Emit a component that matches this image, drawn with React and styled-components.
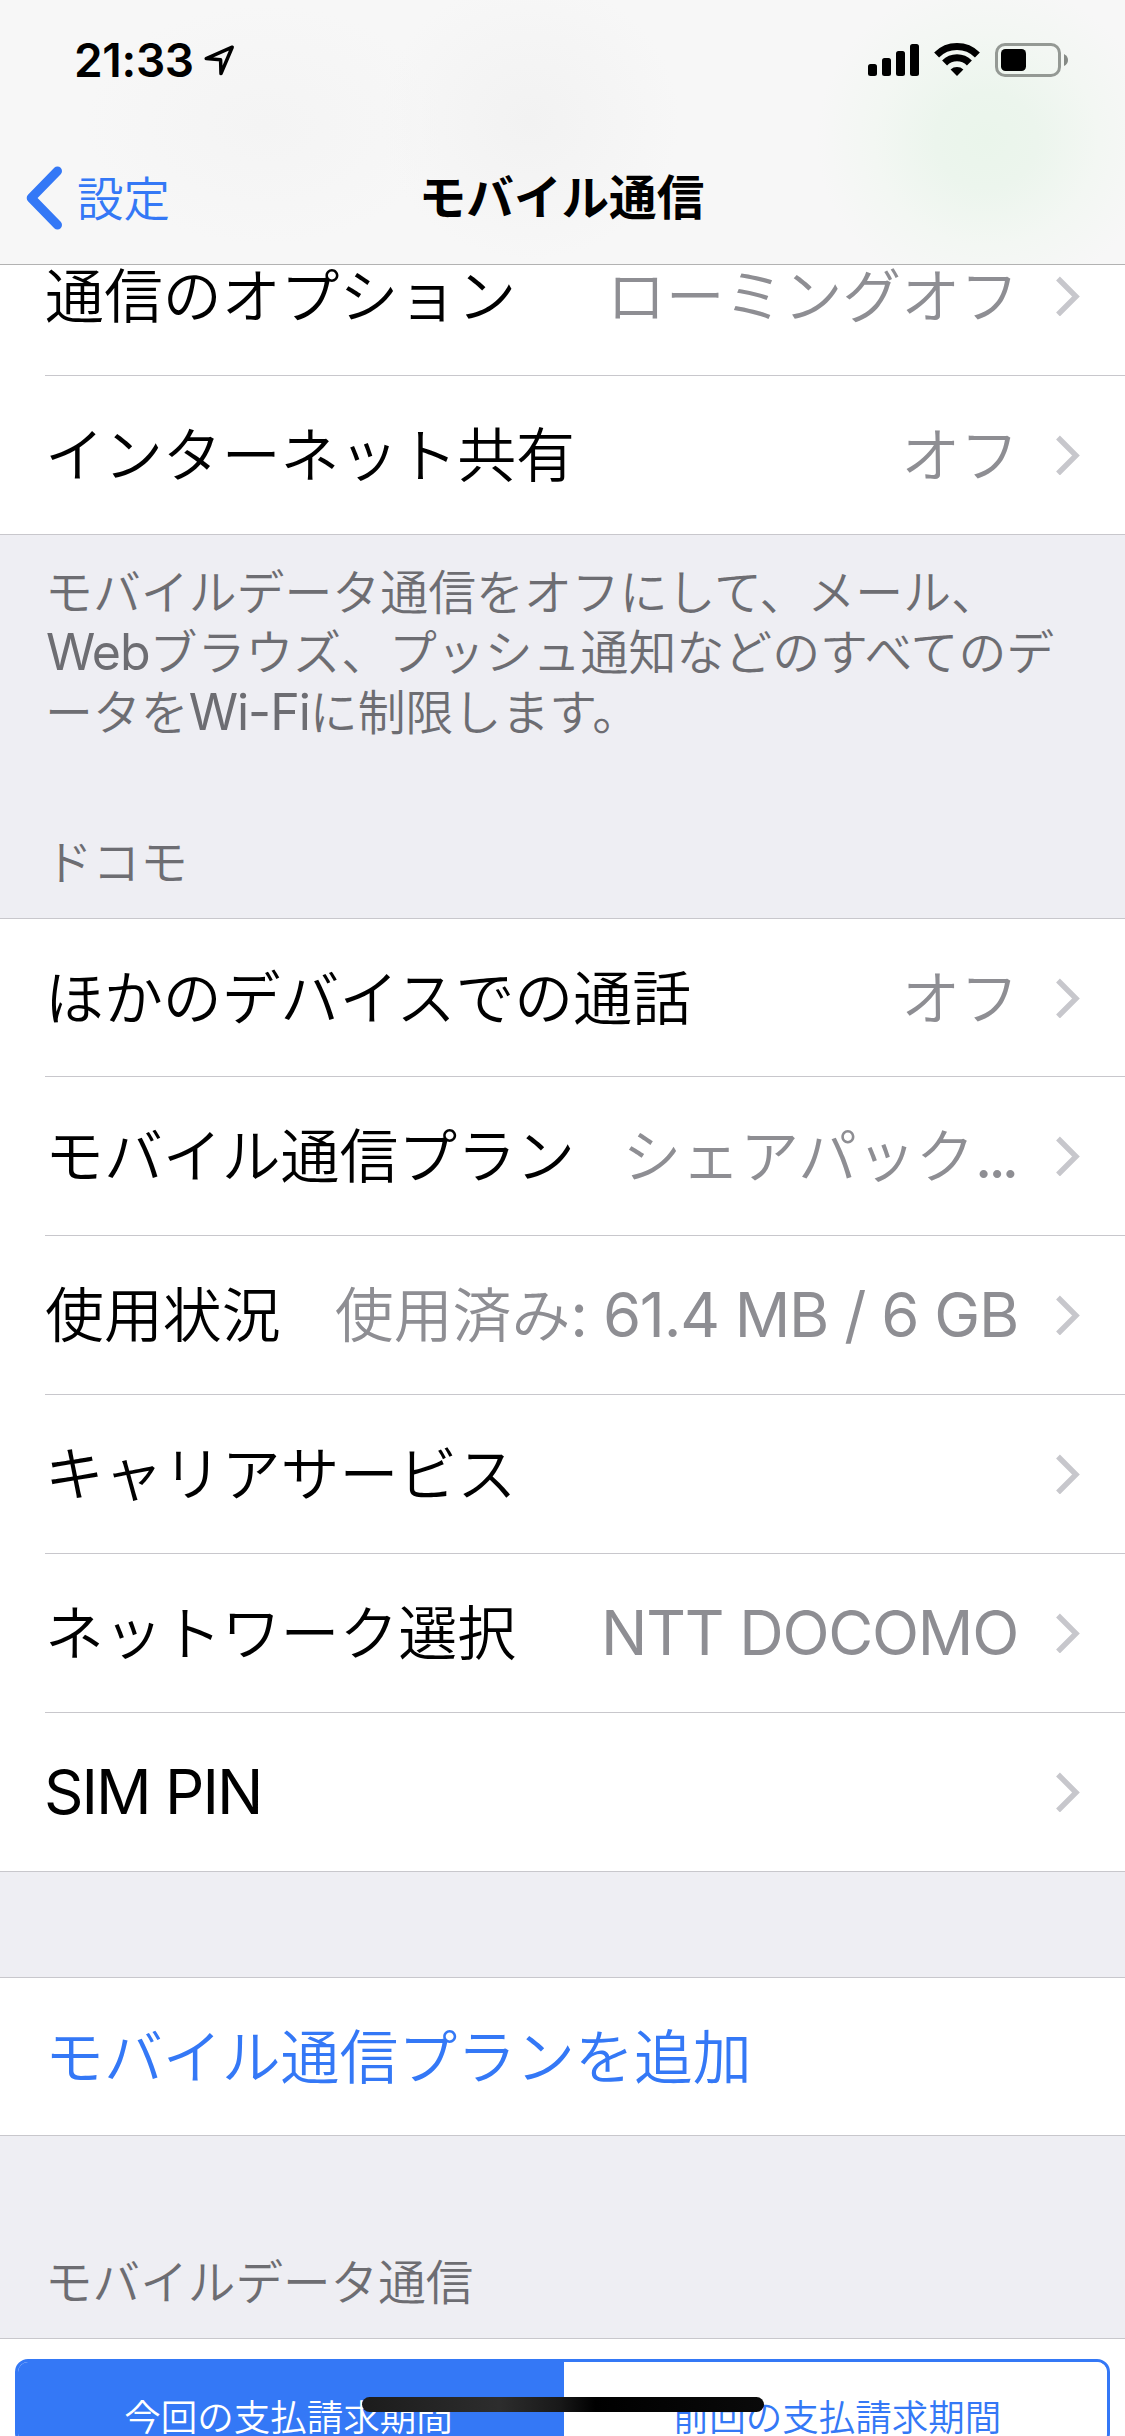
import React from "react";
import styled, { createGlobalStyle } from "styled-components";

const BLUE = "#3478f6";
const LINE = "#c8c7cc";

const Global = createGlobalStyle`
  * { box-sizing: border-box; }
  html, body { margin: 0; padding: 0; background: #efeff4; }
`;

const Screen = styled.main`
  position: relative;
  display: flex;
  flex-direction: column;
  width: 1125px;
  height: 2436px;
  overflow: hidden;
  background: #eeeef3;
  font-family: "Noto Sans CJK JP", sans-serif;
  font-weight: 350;
  color: #000;
`;

const Header = styled.header`
  flex: none;
  height: 265px;
  border-bottom: 1px solid #b2b2b2;
  background:
    radial-gradient(ellipse 170px 160px at 986px 140px, #eaf5eb 0%, #ecf5ed 30%, rgba(240, 247, 240, 0.6) 65%, rgba(247, 247, 247, 0) 100%),
    radial-gradient(ellipse 150px 140px at 530px 120px, #f2f2f2 0%, rgba(242, 242, 242, 0) 100%),
    radial-gradient(ellipse 180px 120px at 265px 125px, #f4f4f4 0%, rgba(244, 244, 244, 0) 100%),
    #f7f7f7;
`;

const StatusBar = styled.div`
  display: flex;
  justify-content: space-between;
  align-items: center;
  height: 120px;
  padding: 0 57px 0 74px;
`;

const StatusGroup = styled.div`
  display: flex;
  align-items: center;
`;

const Clock = styled.span`
  width: 129px;
  font: 600 46px/60px Inter, sans-serif;
  letter-spacing: -0.3px;
  white-space: nowrap;
`;

const NavBar = styled.nav`
  display: grid;
  grid-template-columns: 1fr auto 1fr;
  align-items: center;
  height: 144px;
  padding: 12px 27px 0;
  line-height: 66px;
`;

const BackButton = styled.a`
  display: flex;
  align-items: center;
  gap: 14px;
  margin-left: -1px;
  color: ${BLUE};
  font-size: 46.5px;

  span { padding-bottom: 5px; }
`;

const Title = styled.h1`
  margin: 0;
  padding: 0 2px 6px 0;
  font-size: 47.6px;
  font-weight: 700;
`;

const Scroller = styled.div`
  flex: 1;
  min-height: 0;
  overflow: hidden;
`;

const Content = styled.div`
  margin-top: -48px;
`;

const Group = styled.section`
  background: #fff;
  border-top: ${(p) => (p.$open ? "0" : `1px solid ${LINE}`)};
  border-bottom: 1px solid ${LINE};
`;

const Row = styled.div`
  display: flex;
  align-items: center;
  justify-content: space-between;
  height: 159px;
  margin-left: 45px;
  padding-right: 45px;
  border-bottom: 1px solid ${LINE};
  font-size: 58.9px;
  line-height: 84px;
  white-space: nowrap;
  color: ${(p) => (p.$action ? BLUE : "#000")};

  &:first-child { height: ${(p) => (p.$tall ? "159px" : "158px")}; }
  &:last-child { height: 158px; border-bottom: 0; }
  &:only-child { height: 157px; }
`;

const Label = styled.span`
  padding-bottom: 6px;
`;

const Detail = styled.span`
  display: flex;
  align-items: center;
  gap: 37px;
  color: #8e8e93;
`;

const Value = styled.span`
  padding-bottom: 6px;
`;

const Latin = styled.span`
  font-family: Inter, sans-serif;
  font-weight: 400;
  font-size: 1.045em;
  letter-spacing: ${(p) => p.$track || "-0.02em"};
  margin-left: ${(p) => p.$shift || 0}px;
  margin-right: ${(p) => p.$trail || 0}px;
  line-height: 1;
`;

const Note = styled.p`
  height: 180px;
  margin: 24px 45px 3px;
  color: #6d6d72;
  font-size: 47.9px;
  line-height: 60px;
  white-space: nowrap;
`;

const Caption = styled.h2`
  display: flex;
  align-items: flex-end;
  height: ${(p) => p.$height}px;
  margin: 0;
  padding: 0 45px 28px;
  color: #6d6d72;
  font-size: 47.6px;
  font-weight: 350;
  line-height: 60px;
`;

const Spacer = styled.div`
  height: 105px;
`;

const Billing = styled.section`
  height: 120px;
  padding: 20px 15px 0;
  background: #fff;
  border-top: 1px solid ${LINE};
`;

const Segments = styled.div`
  display: grid;
  grid-template-columns: 546px 1fr;
  height: 87px;
  border: 3px solid ${BLUE};
  border-radius: 13px;
  overflow: hidden;
`;

const Segment = styled.button`
  display: block;
  margin: 0;
  padding: ${(p) => (p.$active ? "27px 5px 0 0" : "27px 0 0 3px")};
  border: 0;
  background: ${(p) => (p.$active ? BLUE : "#fff")};
  color: ${(p) => (p.$active ? "#fff" : BLUE)};
  font: 350 36.5px/50px "Noto Sans CJK JP", sans-serif;
`;

const HomeIndicator = styled.div`
  position: absolute;
  left: 362px;
  top: 2397px;
  width: 402px;
  height: 15px;
  border-radius: 8px;
  background: linear-gradient(90deg, #1c1c1c 0%, #2d2d2d 34%, #191919 49%, #000 58%, #0a0a0a 100%);
`;

const Chevron = () => (
  <svg width="24" height="40" viewBox="0 0 24 40" fill="none">
    <path d="M2 2.5 L20 20.5 L2 38.5" stroke="#c7c7cc" strokeWidth="5.4" />
  </svg>
);

const LocationArrow = () => (
  <svg width="33" height="34" viewBox="0 0 33 34" fill="none">
    <path d="M29.2 4.2 L3.2 15.6 L17.6 16.8 L18 30.6 Z" stroke="#000" strokeWidth="3.5" strokeLinejoin="round" />
  </svg>
);

const StatusIcons = () => (
  <svg width="200" height="34" viewBox="868 43 200 34">
    <rect x="868" y="64" width="9" height="12" rx="2.5" />
    <rect x="882" y="58" width="9" height="18" rx="2.5" />
    <rect x="896" y="51" width="9" height="25" rx="2.5" />
    <rect x="910" y="44" width="9" height="32" rx="2.5" />
    <g fill="none" stroke="#000" strokeWidth="7">
      <path d="M936.6 55 A29 29 0 0 1 977.4 55" />
      <path d="M944.6 63 A17.5 17.5 0 0 1 969.4 63" />
    </g>
    <path d="M957 76 L950.6 69.4 A9.5 9.5 0 0 1 963.4 69.4 Z" />
    <rect x="996.5" y="44.5" width="63" height="31" rx="8.5" fill="none" stroke="#949994" strokeWidth="3" />
    <rect x="1001" y="49" width="25" height="22" rx="4.5" />
    <path d="M1064 54 Q1068 56 1068 60 T1064 66 Z" fill="#858a85" />
  </svg>
);

const BackChevron = () => (
  <svg width="37" height="64" viewBox="0 0 37 64" fill="none">
    <path d="M31.5 5 L5.2 32 L31.5 59" stroke={BLUE} strokeWidth="9" strokeLinecap="round" strokeLinejoin="round" />
  </svg>
);

function Item({ label, value, tall }) {
  return (
    <Row $tall={tall}>
      <Label>{label}</Label>
      <Detail>
        {value && <Value>{value}</Value>}
        <Chevron />
      </Detail>
    </Row>
  );
}

export default function App() {
  return (
    <Screen lang="ja">
      <Global />
      <Header>
        <StatusBar>
          <StatusGroup>
            <Clock>21:33</Clock>
            <LocationArrow />
          </StatusGroup>
          <StatusIcons />
        </StatusBar>
        <NavBar>
          <BackButton>
            <BackChevron />
            <span>設定</span>
          </BackButton>
          <Title>モバイル通信</Title>
        </NavBar>
      </Header>
      <Scroller>
        <Content>
          <Group $open>
            <Item tall label="通信のオプション" value="ローミングオフ" />
            <Item label="インターネット共有" value="オフ" />
          </Group>
          <Note>
            モバイルデータ通信をオフにして、メール、
            <br />
            <Latin $shift={1}>Web</Latin>ブラウズ、プッシュ通知などのすべてのデ
            <br />
            ータを<Latin>Wi-Fi</Latin>に制限します。
          </Note>
          <Caption $height={176}>ドコモ</Caption>
          <Group>
            <Item label="ほかのデバイスでの通話" value="オフ" />
            <Item label="モバイル通信プラン" value={<>シェアパック<Latin $track="-0.07em" $trail={4}>...</Latin></>} />
            <Item label="使用状況" value={<>使用済み<Latin $trail={1}>: 61.4 MB / 6 GB</Latin></>} />
            <Item label="キャリアサービス" />
            <Item label="ネットワーク選択" value={<Latin $trail={1}>NTT DOCOMO</Latin>} />
            <Item label={<Latin $track="-0.032em" $shift={-1}>SIM PIN</Latin>} />
          </Group>
          <Spacer />
          <Group>
            <Row $action>
              <Label>モバイル通信プランを追加</Label>
            </Row>
          </Group>
          <Caption $height={202}>モバイルデータ通信</Caption>
          <Billing>
            <Segments>
              <Segment $active>今回の支払請求期間</Segment>
              <Segment>前回の支払請求期間</Segment>
            </Segments>
          </Billing>
        </Content>
      </Scroller>
      <HomeIndicator />
    </Screen>
  );
}
